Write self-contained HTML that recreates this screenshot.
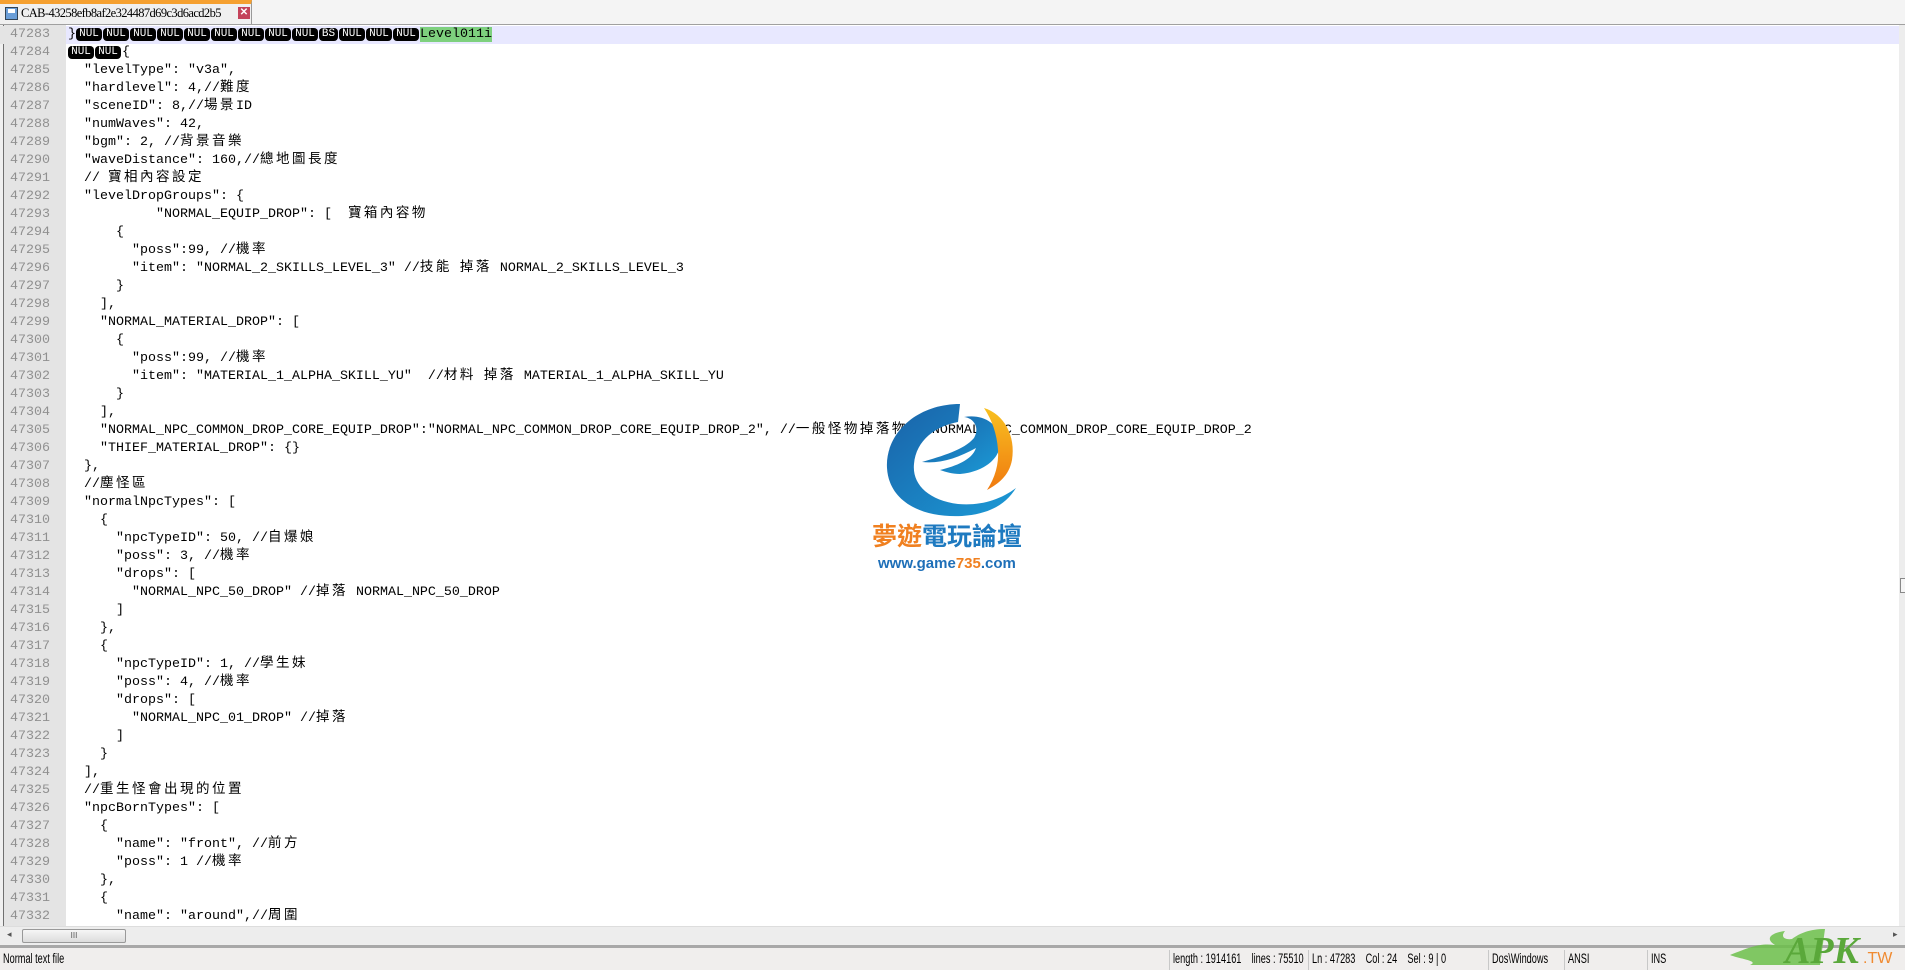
<!DOCTYPE html>
<html><head><meta charset="utf-8">
<style>
html,body{margin:0;padding:0;width:1905px;height:970px;overflow:hidden;background:#fff;font-family:"Liberation Sans","Noto Sans CJK TC",sans-serif;}
#tabbar{position:absolute;left:0;top:0;width:1905px;height:24px;background:#f4f4f4;border-bottom:1px solid #a0a0a0;}
#tab{position:absolute;left:0;top:0;width:252px;height:24px;background:#f0f0f0;border-top:4px solid #f5a030;box-sizing:border-box;border-right:1px solid #999;font-family:"Liberation Serif",serif;font-size:12.5px;line-height:19px;white-space:nowrap;}
#tab .t{position:absolute;left:21px;top:0;white-space:nowrap;letter-spacing:-0.6px;}
#tab .ic{position:absolute;left:5px;top:3px;width:13px;height:13px;background:#6a9ed8;border:1px solid #345;box-sizing:border-box;}
#tab .ic:after{content:"";position:absolute;left:2px;top:1px;width:7px;height:4px;background:#fff;}
#tab .x{position:absolute;left:238px;top:3px;width:12px;height:12px;background:#c4425a;color:#fff;font-size:10px;line-height:12px;text-align:center;font-family:"Liberation Sans",sans-serif;font-weight:bold;}
#gutter{position:absolute;left:0;top:25px;width:66px;height:901px;background:#e4e4e4;border-left:3px solid #f0f0f0;box-sizing:border-box;}
#gutter:before{content:"";position:absolute;left:0;top:0;width:1px;height:901px;background:#707070;}
#editor{position:absolute;left:0;top:26px;width:1900px;}
.ln{position:absolute;left:0;width:1900px;height:18px;font-family:"Liberation Mono","Noto Sans CJK TC",monospace;font-size:13.33px;line-height:18px;white-space:pre;color:#000;}
.ln .n{position:absolute;left:10px;top:0;width:44px;color:#909090;}
.ln .c{position:absolute;left:68px;top:0;height:18px;line-height:18px;}
.ln i{font-style:normal;font-family:"Noto Sans CJK TC",sans-serif;font-size:13.5px;letter-spacing:2.5px;line-height:0;}
.hl{background:#e8e8ff;}
.hl:before{content:"";position:absolute;left:0;top:0;width:66px;height:18px;background:#e4e4e4;}
.tk{display:inline-block;background:#000;color:#fff;border-radius:4px;font-size:11px;line-height:13px;height:13px;padding:0 1px;margin-right:1px;vertical-align:1px;width:24px;text-align:center;}
.tk.b{width:17px;}
.gr{background:#7ed07e;}
#vscroll{position:absolute;left:1899px;top:25px;width:6px;height:901px;background:#ededed;}
#vthumb{position:absolute;left:1900px;top:578px;width:5px;height:13px;border:1px solid #888;border-right:none;background:#f5f5f5;}
#hscroll{position:absolute;left:0;top:926px;width:1905px;height:17px;background:#ededed;border-top:1px solid #ddd;}
#hthumb{position:absolute;left:22px;top:929px;width:102px;height:12px;border:1px solid #999;border-radius:2px;background:linear-gradient(#f6f6f6,#dcdcdc);font-size:8px;text-align:center;line-height:12px;color:#555;}
#sep{position:absolute;left:0;top:944px;width:1905px;height:3px;background:#a8a8a8;border-top:1px solid #eee;}
#status{position:absolute;left:0;top:948px;width:1905px;height:22px;background:#f0eeed;font-size:13.5px;line-height:22px;color:#000;}
#status span{position:absolute;top:0;white-space:nowrap;transform:scaleX(0.68);transform-origin:0 0;}
.sv{position:absolute;top:2px;width:1px;height:20px;background:#c8c8c8;}
</style></head><body>
<div id="tabbar"><div id="tab"><div class="ic"></div><span class="t">CAB-43258efb8af2e324487d69c3d6acd2b5</span><div class="x">✕</div></div></div>
<div id="gutter"></div>
<div id="editor">
<div class="ln hl" style="top:0"><span class="n">47283</span><span class="c">}<span class="tk">NUL</span><span class="tk">NUL</span><span class="tk">NUL</span><span class="tk">NUL</span><span class="tk">NUL</span><span class="tk">NUL</span><span class="tk">NUL</span><span class="tk">NUL</span><span class="tk">NUL</span><span class="tk b">BS</span><span class="tk">NUL</span><span class="tk">NUL</span><span class="tk">NUL</span><span class="gr">Level011i</span></span></div>
<div class="ln" style="top:18px"><span class="n">47284</span><span class="c"><span class="tk">NUL</span><span class="tk">NUL</span>{</span></div>
<div class="ln" style="top:36px"><span class="n">47285</span><span class="c">  "levelType": "v3a",</span></div>
<div class="ln" style="top:54px"><span class="n">47286</span><span class="c">  "hardlevel": 4,//<i>難度</i></span></div>
<div class="ln" style="top:72px"><span class="n">47287</span><span class="c">  "sceneID": 8,//<i>場景</i>ID</span></div>
<div class="ln" style="top:90px"><span class="n">47288</span><span class="c">  "numWaves": 42,</span></div>
<div class="ln" style="top:108px"><span class="n">47289</span><span class="c">  "bgm": 2, //<i>背景音樂</i></span></div>
<div class="ln" style="top:126px"><span class="n">47290</span><span class="c">  "waveDistance": 160,//<i>總地圖長度</i></span></div>
<div class="ln" style="top:144px"><span class="n">47291</span><span class="c">  // <i>寶相內容設定</i></span></div>
<div class="ln" style="top:162px"><span class="n">47292</span><span class="c">  "levelDropGroups": {</span></div>
<div class="ln" style="top:180px"><span class="n">47293</span><span class="c">           "NORMAL_EQUIP_DROP": [  <i>寶箱內容物</i></span></div>
<div class="ln" style="top:198px"><span class="n">47294</span><span class="c">      {</span></div>
<div class="ln" style="top:216px"><span class="n">47295</span><span class="c">        "poss":99, //<i>機率</i></span></div>
<div class="ln" style="top:234px"><span class="n">47296</span><span class="c">        "item": "NORMAL_2_SKILLS_LEVEL_3" //<i>技能</i> <i>掉落</i> NORMAL_2_SKILLS_LEVEL_3</span></div>
<div class="ln" style="top:252px"><span class="n">47297</span><span class="c">      }</span></div>
<div class="ln" style="top:270px"><span class="n">47298</span><span class="c">    ],</span></div>
<div class="ln" style="top:288px"><span class="n">47299</span><span class="c">    "NORMAL_MATERIAL_DROP": [</span></div>
<div class="ln" style="top:306px"><span class="n">47300</span><span class="c">      {</span></div>
<div class="ln" style="top:324px"><span class="n">47301</span><span class="c">        "poss":99, //<i>機率</i></span></div>
<div class="ln" style="top:342px"><span class="n">47302</span><span class="c">        "item": "MATERIAL_1_ALPHA_SKILL_YU"  //<i>材料</i> <i>掉落</i> MATERIAL_1_ALPHA_SKILL_YU</span></div>
<div class="ln" style="top:360px"><span class="n">47303</span><span class="c">      }</span></div>
<div class="ln" style="top:378px"><span class="n">47304</span><span class="c">    ],</span></div>
<div class="ln" style="top:396px"><span class="n">47305</span><span class="c">    "NORMAL_NPC_COMMON_DROP_CORE_EQUIP_DROP":"NORMAL_NPC_COMMON_DROP_CORE_EQUIP_DROP_2", //<i>一般怪物掉落物為</i> NORMAL_NPC_COMMON_DROP_CORE_EQUIP_DROP_2</span></div>
<div class="ln" style="top:414px"><span class="n">47306</span><span class="c">    "THIEF_MATERIAL_DROP": {}</span></div>
<div class="ln" style="top:432px"><span class="n">47307</span><span class="c">  },</span></div>
<div class="ln" style="top:450px"><span class="n">47308</span><span class="c">  //<i>塵怪區</i></span></div>
<div class="ln" style="top:468px"><span class="n">47309</span><span class="c">  "normalNpcTypes": [</span></div>
<div class="ln" style="top:486px"><span class="n">47310</span><span class="c">    {</span></div>
<div class="ln" style="top:504px"><span class="n">47311</span><span class="c">      "npcTypeID": 50, //<i>自爆娘</i></span></div>
<div class="ln" style="top:522px"><span class="n">47312</span><span class="c">      "poss": 3, //<i>機率</i></span></div>
<div class="ln" style="top:540px"><span class="n">47313</span><span class="c">      "drops": [</span></div>
<div class="ln" style="top:558px"><span class="n">47314</span><span class="c">        "NORMAL_NPC_50_DROP" //<i>掉落</i> NORMAL_NPC_50_DROP</span></div>
<div class="ln" style="top:576px"><span class="n">47315</span><span class="c">      ]</span></div>
<div class="ln" style="top:594px"><span class="n">47316</span><span class="c">    },</span></div>
<div class="ln" style="top:612px"><span class="n">47317</span><span class="c">    {</span></div>
<div class="ln" style="top:630px"><span class="n">47318</span><span class="c">      "npcTypeID": 1, //<i>學生妹</i></span></div>
<div class="ln" style="top:648px"><span class="n">47319</span><span class="c">      "poss": 4, //<i>機率</i></span></div>
<div class="ln" style="top:666px"><span class="n">47320</span><span class="c">      "drops": [</span></div>
<div class="ln" style="top:684px"><span class="n">47321</span><span class="c">        "NORMAL_NPC_01_DROP" //<i>掉落</i></span></div>
<div class="ln" style="top:702px"><span class="n">47322</span><span class="c">      ]</span></div>
<div class="ln" style="top:720px"><span class="n">47323</span><span class="c">    }</span></div>
<div class="ln" style="top:738px"><span class="n">47324</span><span class="c">  ],</span></div>
<div class="ln" style="top:756px"><span class="n">47325</span><span class="c">  //<i>重生怪會出現的位置</i></span></div>
<div class="ln" style="top:774px"><span class="n">47326</span><span class="c">  "npcBornTypes": [</span></div>
<div class="ln" style="top:792px"><span class="n">47327</span><span class="c">    {</span></div>
<div class="ln" style="top:810px"><span class="n">47328</span><span class="c">      "name": "front", //<i>前方</i></span></div>
<div class="ln" style="top:828px"><span class="n">47329</span><span class="c">      "poss": 1 //<i>機率</i></span></div>
<div class="ln" style="top:846px"><span class="n">47330</span><span class="c">    },</span></div>
<div class="ln" style="top:864px"><span class="n">47331</span><span class="c">    {</span></div>
<div class="ln" style="top:882px"><span class="n">47332</span><span class="c">      "name": "around",//<i>周圍</i></span></div>
</div>

<svg style="position:absolute;left:860px;top:390px" width="200" height="190" viewBox="0 0 200 190">
<defs><linearGradient id="bl" x1="0" y1="0" x2="1" y2="1"><stop offset="0" stop-color="#1a62a8"/><stop offset="1" stop-color="#1b9ad6"/></linearGradient>
<linearGradient id="or" x1="0" y1="0" x2="0" y2="1"><stop offset="0" stop-color="#f8c020"/><stop offset="1" stop-color="#f07a10"/></linearGradient></defs>
<path d="M100 14 C55 14 25 45 27 78 C29 112 62 128 102 126 C130 124 146 114 156 98 C140 110 120 116 98 114 C68 110 52 94 54 74 C56 50 76 36 98 32 Z" fill="url(#bl)"/>
<path d="M62 72 C82 66 104 60 114 48 C120 38 114 28 104 27 C122 24 138 32 140 50 C142 68 124 82 100 84 C92 84 86 82 80 80 C96 76 112 70 116 58 C98 68 80 74 62 72 Z" fill="url(#bl)"/>
<path d="M124 18 C144 24 156 46 152 70 C149 86 138 94 127 100 C135 88 139 74 138 60 C137 44 132 30 124 18 Z" fill="url(#or)"/>
<text x="12" y="155" font-family="'Noto Sans CJK TC',sans-serif" font-weight="bold" font-size="25" fill="#f08020">夢遊</text>
<text x="62" y="155" font-family="'Noto Sans CJK TC',sans-serif" font-weight="bold" font-size="25" fill="#1e7ac0">電玩論壇</text>
<text x="18" y="178" font-family="'Liberation Sans',sans-serif" font-weight="bold" font-size="15" fill="#1e6fb8">www.game<tspan fill="#f08020">735</tspan>.com</text>
</svg>

<div id="vscroll"></div><div id="vthumb"></div>
<div id="hscroll"><span style="position:absolute;left:7px;top:2px;font-size:9px;color:#555">◂</span><span style="position:absolute;left:1893px;top:2px;font-size:9px;color:#555">▸</span></div>
<div id="hthumb">III</div>
<div id="sep"></div>
<div id="status">
<span style="left:3px">Normal text file</span>
<div class="sv" style="left:1169px"></div>
<span style="left:1173px">length : 1914161&nbsp;&nbsp;&nbsp; lines : 75510</span>
<div class="sv" style="left:1308px"></div>
<span style="left:1312px">Ln : 47283&nbsp;&nbsp;&nbsp; Col : 24&nbsp;&nbsp;&nbsp; Sel : 9 | 0</span>
<div class="sv" style="left:1488px"></div>
<span style="left:1492px">Dos\Windows</span>
<div class="sv" style="left:1564px"></div>
<span style="left:1568px">ANSI</span>
<div class="sv" style="left:1647px"></div>
<span style="left:1651px">INS</span>
</div>
<svg style="position:absolute;left:1730px;top:925px" width="175" height="45" viewBox="0 0 175 45">
<path d="M0 30 C20 22 30 18 45 20 C35 14 40 8 55 6 C50 12 55 15 62 14 C70 8 80 4 95 4 L90 40 L20 40 C30 36 10 34 0 30 Z" fill="#6cbf4a" opacity="0.85"/>
<text x="55" y="38" font-family="'Liberation Serif',serif" font-weight="bold" font-style="italic" font-size="38" fill="#5aa83a">APK</text>
<text x="133" y="38" font-family="'Liberation Sans',sans-serif" font-size="16" fill="#f08a30">.TW</text>
</svg>
</body></html>
